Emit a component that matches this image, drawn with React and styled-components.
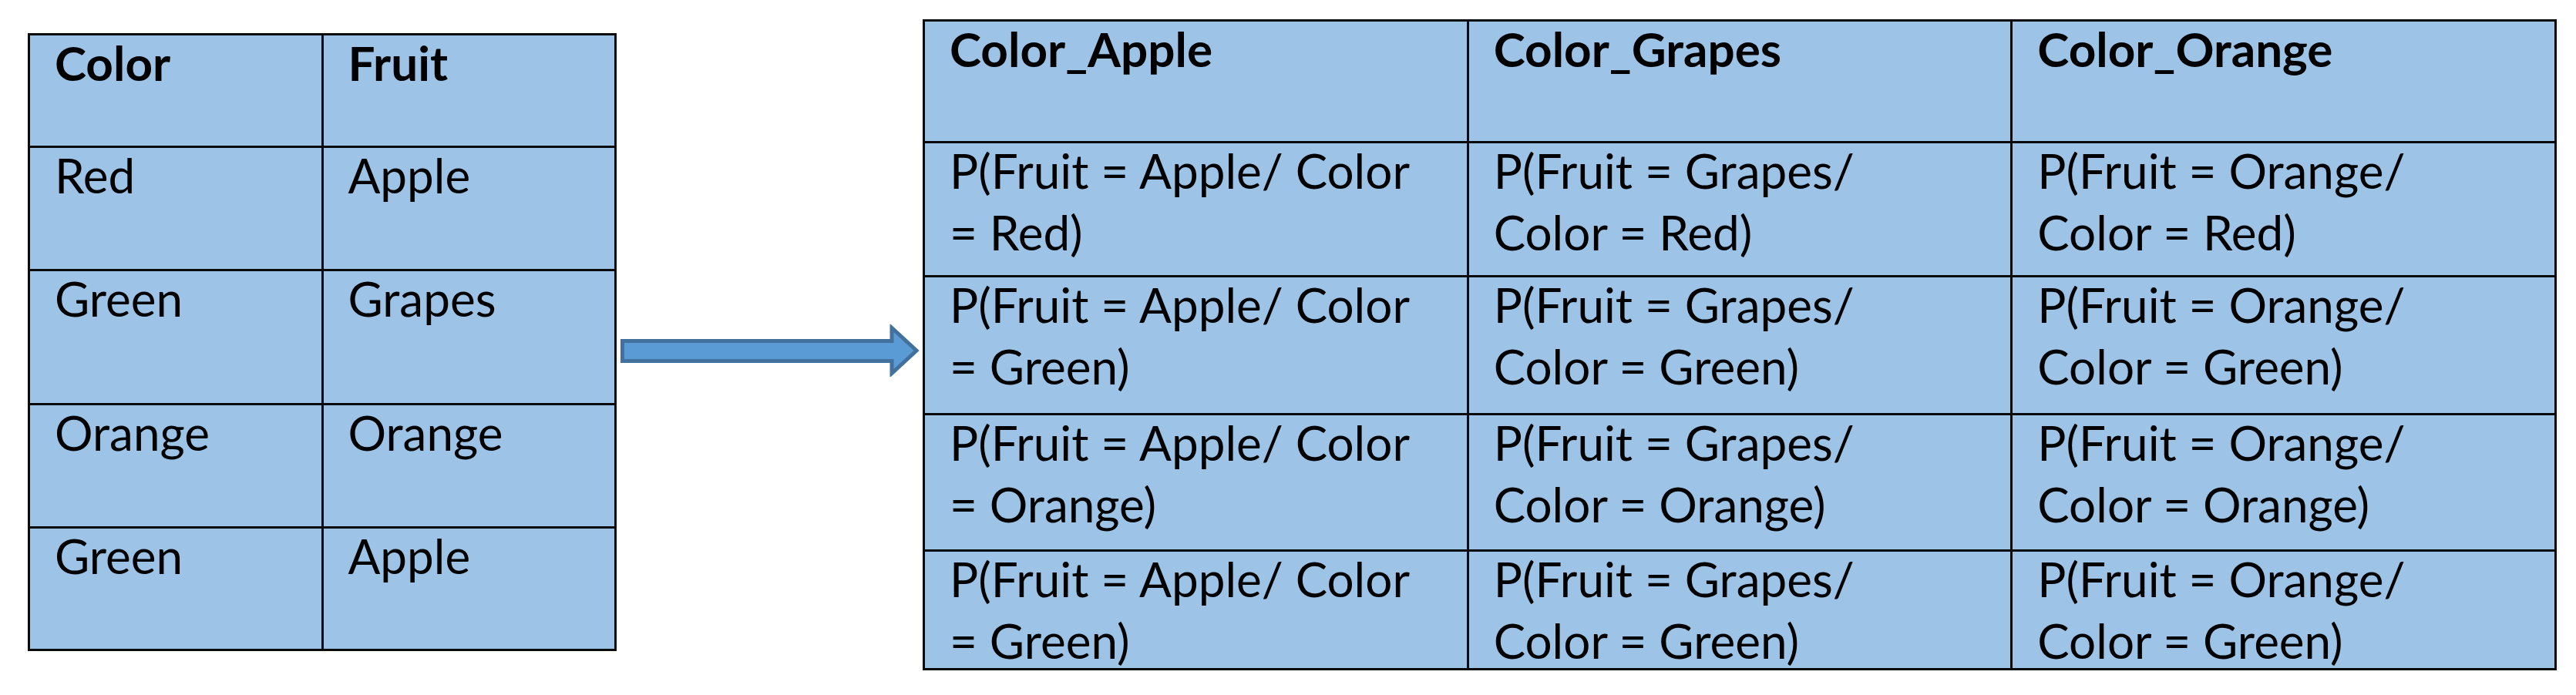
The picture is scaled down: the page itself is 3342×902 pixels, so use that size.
import React from "react";
import styled, { createGlobalStyle } from "styled-components";

const GlobalStyle = createGlobalStyle`
  body {
    margin: 0;
    background: #ffffff;
    font-family: Lato, "Liberation Sans", sans-serif;
    color: #000;
  }
`;

const sourceRows = [
  ["Red", "Apple"],
  ["Green", "Grapes"],
  ["Orange", "Orange"],
  ["Green", "Apple"],
];

const encodedHeads = ["Color_Apple", "Color_Grapes", "Color_Orange"];
const colors = ["Red", "Green", "Orange", "Green"];

// Word wrapped each cell in two lines; keep the same breaks
function probLines(fruit, color) {
  if (fruit === "Apple") return ["P(Fruit = Apple/ Color", `= ${color})`];
  return [`P(Fruit = ${fruit}/`, `Color = ${color})`];
}

function App() {
  return (
    <>
      <GlobalStyle />
      <Page>
        <SourceTable>
          <HeadCell>Color</HeadCell>
          <HeadCell>Fruit</HeadCell>
          {sourceRows.map(([c, f], i) => (
            <React.Fragment key={i}>
              <Cell>{c}</Cell>
              <Cell>{f}</Cell>
            </React.Fragment>
          ))}
        </SourceTable>

        <Arrow viewBox="0 0 388 68" width="388" height="68">
          <path
            d="M2.5,21.5 H352 V4.5 L384,34 L352,63.5 V47.5 H2.5 Z"
            fill="#5B9BD5"
            stroke="#41719C"
            strokeWidth="5"
          />
        </Arrow>

        <EncodedTable>
          {encodedHeads.map((h) => (
            <HeadCell key={h}>{h}</HeadCell>
          ))}
          {colors.map((c, r) =>
            ["Apple", "Grapes", "Orange"].map((f) => (
              <Cell key={r + f}>
                {probLines(f, c).map((line, i) => (
                  <span key={i}>{line}</span>
                ))}
              </Cell>
            ))
          )}
        </EncodedTable>
      </Page>
    </>
  );
}

const Page = styled.div`
  width: 3342px;
  height: 902px;
  display: flex;
  align-items: flex-start;
  padding-left: 36px;
  box-sizing: border-box;
`;

const Table = styled.div`
  display: grid;
  box-sizing: border-box;
  border-top: 3px solid #0a0a0a;
  border-left: 3px solid #0a0a0a;
  background: #9dc3e6;
`;

const SourceTable = styled(Table)`
  margin-top: 43px;
  width: 764px;
  grid-template-columns: 1fr 1fr;
  grid-template-rows: 146px 160px 174px 160px 159px;
`;

const EncodedTable = styled(Table)`
  margin-top: 25px;
  margin-left: 4px;
  width: 2120px;
  grid-template-columns: 1fr 1fr 1fr;
  grid-template-rows: 158px 174px 179px 177px 154px;
`;

const Cell = styled.div`
  box-sizing: border-box;
  display: flex;
  flex-direction: column;
  gap: 12px;
  border-right: 3px solid #0a0a0a;
  border-bottom: 3px solid #0a0a0a;
  padding: 1px 16px 0 32px;
  font-size: 62px;
  line-height: 68px;
  white-space: nowrap;
`;

const HeadCell = styled(Cell)`
  font-weight: 700;
`;

const Arrow = styled.svg`
  display: block;
  margin-top: 421px;
  margin-left: 5px;
  flex-shrink: 0;
`;

export default App;
